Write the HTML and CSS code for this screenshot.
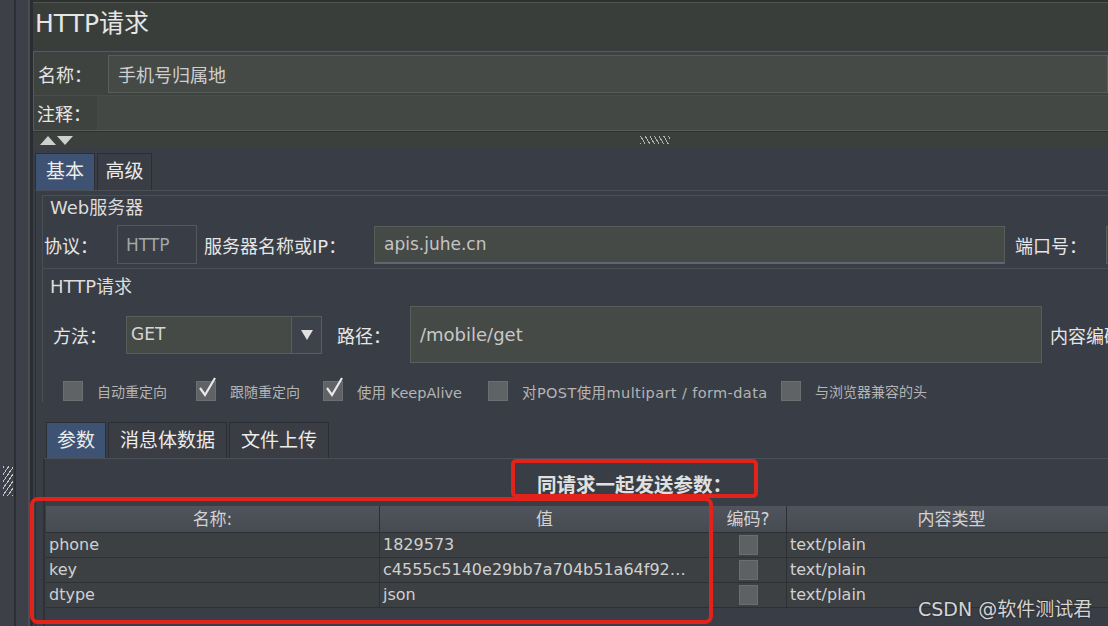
FILE: index.html
```html
<!DOCTYPE html>
<html lang="zh-CN">
<head>
<meta charset="utf-8">
<title>HTTP请求</title>
<link rel="stylesheet" href="styles.css">
</head>
<body>
<div class="app">
  <div class="rail">
    <div class="rail-a"><div class="grip"></div></div>
    <div class="rail-b"></div>
  </div>
  <div class="main">
    <div class="titlebar">HTTP请求</div>
    <div class="meta">
      <div class="name-row"><span class="lbl name-lbl">名称：</span><div class="field name-field">手机号归属地</div></div>
      <div class="comment-row"><span class="lbl comment-lbl">注释：</span><div class="field comment-field"></div></div>
    </div>
    <div class="splitbar">
      <svg class="arrows" width="34" height="11" viewBox="0 0 34 11"><polygon points="0,10 8,1 16,10" fill="#cfcfcf"/><polygon points="17,1 33,1 25,10" fill="#cfcfcf"/></svg>
      <span class="dots"></span>
    </div>
    <div class="lower">
      <div class="tabs">
        <div class="tab active">基本</div>
        <div class="tab t2">高级</div>
      </div>
      <div class="tabpanel">
        <div class="group web">
          <div class="gtitle">Web服务器</div>
          <div class="row web-row">
            <span class="lbl proto-lbl">协议：</span>
            <div class="proto">HTTP</div>
            <span class="lbl srv-lbl">服务器名称或IP：</span>
            <div class="field srv">apis.juhe.cn</div>
            <span class="lbl port-lbl">端口号：</span>
            <div class="field port"></div>
          </div>
        </div>
        <div class="group req">
          <div class="gtitle req-title">HTTP请求</div>
          <div class="row method-row">
            <span class="lbl method-lbl">方法：</span>
            <div class="select"><span class="sel-text">GET</span><span class="sel-btn"><svg width="12" height="10" viewBox="0 0 12 10"><polygon points="0,0 12,0 6,10" fill="#e0e0e0"/></svg></span></div>
            <span class="lbl path-lbl">路径：</span>
            <div class="field path">/mobile/get</div>
            <span class="enc-wrap"><span class="lbl enc-lbl">内容编码</span></span>
          </div>
          <div class="checks">
            <span class="cb"></span><span class="cb-lbl w1">自动重定向</span>
            <span class="cb checked"><svg width="22" height="24" viewBox="0 0 22 24"><path d="M4 12 L9 19 L19 2" fill="none" stroke="#e8e8e8" stroke-width="2.2"/></svg></span><span class="cb-lbl w2">跟随重定向</span>
            <span class="cb checked"><svg width="22" height="24" viewBox="0 0 22 24"><path d="M4 12 L9 19 L19 2" fill="none" stroke="#e8e8e8" stroke-width="2.2"/></svg></span><span class="cb-lbl w3">使用 KeepAlive</span>
            <span class="cb"></span><span class="cb-lbl w4">对POST使用multipart / form-data</span>
            <span class="cb"></span><span class="cb-lbl">与浏览器兼容的头</span>
          </div>
        </div>
        <div class="subtabs">
          <div class="stab active">参数</div>
          <div class="stab">消息体数据</div>
          <div class="stab">文件上传</div>
        </div>
        <div class="subpanel">
          <div class="send-title">同请求一起发送参数：</div>
          <div class="table">
            <div class="th">名称:</div><div class="th">值</div><div class="th">编码?</div><div class="th">内容类型</div>
            <div class="td">phone</div><div class="td">1829573</div><div class="td tc"><span class="box"></span></div><div class="td">text/plain</div>
            <div class="td">key</div><div class="td">c4555c5140e29bb7a704b51a64f92…</div><div class="td tc"><span class="box"></span></div><div class="td">text/plain</div>
            <div class="td">dtype</div><div class="td">json</div><div class="td tc"><span class="box"></span></div><div class="td">text/plain</div>
          </div>
        </div>
      </div>
    </div>
  </div>
  <div class="mark mark-title"></div>
  <div class="mark mark-table"></div>
  <div class="watermark">CSDN @软件测试君</div>
</div>
</body>
</html>
```
FILE: styles.css
```css
* { box-sizing: border-box; }
html, body { margin: 0; }
body {
  width: 1108px;
  height: 626px;
  overflow: hidden;
  background: #3a3d45;
  font-family: "DejaVu Sans", "Noto Sans CJK SC", sans-serif;
  color: #e2e2e2;
}
.app { display: flex; height: 626px; position: relative; }

/* left rail */
.rail { width: 33px; flex: none; display: flex; background: #3d4048; }
.rail-a { width: 16px; border-right: 2px solid #2b2e33; padding: 466px 0 0 3px; }
.grip {
  width: 10px; height: 30px;
  background: repeating-linear-gradient(-55deg, #c4c4c4 0 1px, transparent 1px 4px);
}
.rail-b { flex: 1; border-right: 3px solid #2a2d31; box-shadow: inset -2px 0 #4a4d54; }

.main { flex: 1; min-width: 0; display: flex; flex-direction: column; overflow: hidden; }

.titlebar {
  height: 50px; flex: none;
  border-top: 2px solid #2e312f;
  box-shadow: inset 0 1px #50544f;
  background: #3a3e3b;
  font-size: 25px; line-height: 44px;
  padding-left: 2px; white-space: nowrap;
  color: #e6e6e6;
}

.lbl { font-size: 18px; white-space: nowrap; color: #e6e6e6; flex: none; }
.field {
  background: #464a47; border: 1px solid #5a5e5b;
  color: #cfcfcf; font-size: 18px; white-space: nowrap;
  display: flex; align-items: center; padding-left: 9px;
}

.meta {
  flex: none; height: 80px;
  margin-top: 1px;
  border: 1px solid #575b58; border-right: none;
  background: #3f4340;
}
.name-row { height: 43px; display: flex; align-items: center; }
.name-lbl { width: 74px; padding-left: 4px; }
.name-field { flex: 1; height: 38px; }
.comment-row { height: 35px; display: flex; align-items: center; border-top: 1px solid #4a4e4b; }
.comment-lbl { width: 63px; padding-left: 3px; }
.comment-field { flex: 1; height: 34px; border: none; background: #444845; }

.splitbar {
  flex: none; height: 17px;
  background: #3c403d; border-top: 1px solid #2e3130;
  display: flex; align-items: center; padding-left: 7px;
}
.arrows { display: block; }
.dots {
  margin-left: 566px; width: 30px; height: 8px;
  background: repeating-linear-gradient(60deg, #cfcfcf 0 1px, transparent 1px 4px);
  opacity: .8;
}

.lower { flex: 1; background: #393d45; padding-top: 5px; display: flex; flex-direction: column; }
.tabs { display: flex; padding-left: 2px; height: 37px; flex: none; gap: 2px; }
.tab {
  width: 60px; font-size: 19px; line-height: 35px; text-align: center;
  border: 1px solid #2b2e33; border-bottom: none; background: #3a3d44; color: #ececec;
}
.tab.t2 { width: 55px; }
.tab.active { background: #3e5373; }

.tabpanel {
  flex: 1; margin-left: 2px;
  border-top: 1px solid #4b4f57; border-left: 1px solid #2c2f33;
  padding-left: 6px; padding-top: 4px;
}
.group { border-top: 1px solid #4a4e56; border-left: 1px solid #4a4e56; }
.gtitle { font-size: 18px; line-height: 24px; padding-left: 7px; color: #dcdcdc; white-space: nowrap; }
.row { display: flex; align-items: center; }
.web { padding-bottom: 4px; }
.web-row { margin-top: 5px; height: 39px; padding-left: 1px; }
.proto-lbl { margin-right: 19px; }
.proto {
  width: 80px; height: 39px; flex: none;
  border: 1px solid #53575e; color: #a4a6a8; font-size: 17px;
  display: flex; align-items: center; padding-left: 8px;
}
.srv-lbl { margin-left: 7px; width: 151px; margin-right: 19px; }
.srv { width: 631px; height: 38px; flex: none; font-size: 17px; color: #c4c4c4; border-bottom: 2px solid #5e6670; }
.port-lbl { margin-left: 10px; width: 73px; margin-right: 18px; }
.port { width: 100px; height: 38px; flex: none; }

.req-title { margin-top: 6px; }
.method-row { margin-top: 7px; height: 57px; padding-left: 10px; }
.method-lbl { margin-right: 19px; }
.select {
  width: 196px; height: 38px; flex: none;
  background: #464a47; border: 1px solid #5a5e5b;
  display: flex;
}
.sel-text { flex: 1; font-size: 17px; color: #d6d6d6; padding-left: 4px; line-height: 34px; }
.sel-btn {
  width: 30px; border-left: 1px solid #5a5e5b; background: #3e424a;
  display: flex; align-items: center; justify-content: center;
}
.path-lbl { margin-left: 15px; width: 55px; margin-right: 18px; }
.path { width: 632px; height: 57px; flex: none; font-size: 18px; color: #c8c8c8; }
.enc-wrap { margin-left: 8px; flex: 1; min-width: 0; overflow: hidden; }

.checks {
  margin-top: 17px; height: 22px; padding-left: 20px;
  display: flex; align-items: center; white-space: nowrap;
  margin-bottom: 20px;
}
.cb {
  width: 20px; height: 20px; flex: none;
  background: #606366; border: 1px solid #6c6f72;
  position: relative;
}
.cb svg { position: absolute; left: -1px; top: -6px; }
.cb-lbl { font-size: 14px; color: #b4b4b4; margin-left: 14px; margin-right: 22px; flex: none; }
.cb-lbl.w1 { width: 71px; margin-right: 28px; }
.cb-lbl.w2 { width: 71px; }
.cb-lbl.w3 { width: 110px; margin-right: 21px; font-size: 14.5px; }
.cb-lbl.w4 { width: 241px; font-size: 14.5px; letter-spacing: 0.4px; margin-right: 18px; }

.subtabs { display: flex; gap: 2px; padding-left: 4px; height: 36px; }
.stab {
  font-size: 19px; line-height: 34px; padding: 0 11px;
  border: 1px solid #2b2e33; border-bottom: none; background: #3a3d44; color: #ececec;
  white-space: nowrap;
}
.stab.active { background: #3e5373; padding: 0 10px; }

.subpanel {
  margin-left: 1px; height: 200px;
  border-top: 1px solid #4b4f57; border-left: 2px solid #2e3136;
  padding-left: 1px;
}
.send-title {
  height: 47px; padding-top: 10px; padding-left: 491px;
  font-size: 19.5px; font-weight: bold; color: #e0e0e0; white-space: nowrap;
}
.table {
  display: grid;
  grid-template-columns: 334px 330px 77px 330px;
  grid-template-rows: 27px 25px 25px 25px;
  background: #3d4043;
}
.th {
  background: linear-gradient(#50545c, #464a51);
  border-right: 1px solid #2c2f33; border-bottom: 1px solid #2c2f33;
  text-align: center; font-size: 17px; line-height: 26px; color: #d2d2d2; white-space: nowrap;
}
.td {
  border-right: 1px solid #2e3134; border-bottom: 1px solid #2e3134;
  font-size: 16px; line-height: 24px; padding-left: 3px; color: #d0d0d0;
  white-space: nowrap; overflow: hidden;
}
.tc { display: flex; align-items: center; justify-content: center; padding-left: 0; }
.box { width: 19px; height: 20px; background: #5e6164; border: 1px solid #6b6e71; }

/* annotation overlays */
.mark { position: absolute; border: 4px solid #e2231b; border-radius: 5px; pointer-events: none; }
.mark-title { left: 511px; top: 459px; width: 247px; height: 39px; }
.mark-table { left: 30px; top: 497px; width: 683px; height: 127px; border-radius: 8px; }
.watermark {
  position: absolute; left: 918px; top: 594px;
  font-size: 19px; color: #d4d4d4; white-space: nowrap;
  text-shadow: 0 0 2px #222;
}
```
